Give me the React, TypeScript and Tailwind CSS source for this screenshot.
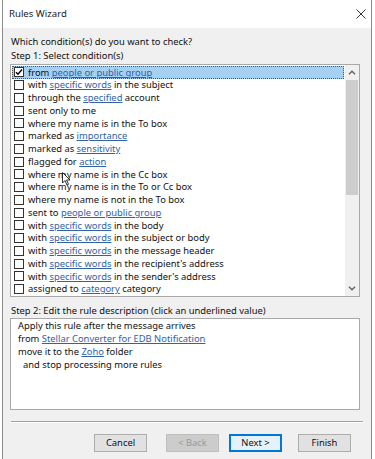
import React from "react";

type Part = { t: string; link?: boolean };

const conditions: Part[][] = [
  [{ t: "from " }, { t: "people or public group", link: true }],
  [{ t: "with " }, { t: "specific words", link: true }, { t: " in the subject" }],
  [{ t: "through the " }, { t: "specified", link: true }, { t: " account" }],
  [{ t: "sent only to me" }],
  [{ t: "where my name is in the To box" }],
  [{ t: "marked as " }, { t: "importance", link: true }],
  [{ t: "marked as " }, { t: "sensitivity", link: true }],
  [{ t: "flagged for " }, { t: "action", link: true }],
  [{ t: "where my name is in the Cc box" }],
  [{ t: "where my name is in the To or Cc box" }],
  [{ t: "where my name is not in the To box" }],
  [{ t: "sent to " }, { t: "people or public group", link: true }],
  [{ t: "with " }, { t: "specific words", link: true }, { t: " in the body" }],
  [{ t: "with " }, { t: "specific words", link: true }, { t: " in the subject or body" }],
  [{ t: "with " }, { t: "specific words", link: true }, { t: " in the message header" }],
  [{ t: "with " }, { t: "specific words", link: true }, { t: " in the recipient's address" }],
  [{ t: "with " }, { t: "specific words", link: true }, { t: " in the sender's address" }],
  [{ t: "assigned to " }, { t: "category", link: true }, { t: " category" }],
];

function Text({ parts }: { parts: Part[] }) {
  return (
    <>
      {parts.map((p, i) =>
        p.link ? (
          <span key={i} className="text-[#2f63a6] underline underline-offset-[1px]">
            {p.t}
          </span>
        ) : (
          <span key={i}>{p.t}</span>
        )
      )}
    </>
  );
}

function Checkbox({ checked }: { checked?: boolean }) {
  return (
    <div className="w-[10px] h-[10px] border border-[#333333] bg-white flex items-center justify-center shrink-0">
      {checked && (
        <svg width="8" height="8" viewBox="0 0 8 8">
          <path d="M1 4.2 L3 6.3 L7 1.5" fill="none" stroke="#000" strokeWidth="1.4" />
        </svg>
      )}
    </div>
  );
}

function Button({ text, disabled, focus }: { text: string; disabled?: boolean; focus?: boolean }) {
  return (
    <div
      className={
        "w-[53px] h-[18px] flex items-center justify-center " +
        (disabled
          ? "bg-[#cccccc] border border-[#bfbfbf] text-[#9a9a9a]"
          : focus
          ? "bg-[#e5f1fb] border-2 border-[#0078d7] text-[#111]"
          : "bg-[#e1e1e1] border border-[#adadad] text-[#111]")
      }
    >
      {text}
    </div>
  );
}

function ConditionList() {
  return (
    <div className="ml-[7px] w-[350px] h-[233px] border border-[#a9a9a9] bg-white flex">
      <div className="flex-1 pt-[1px] pl-[1px]">
        {conditions.map((c, i) => (
          <div
            key={i}
            className={
              "h-[12.75px] flex items-center gap-[4px] pl-[2px] whitespace-nowrap " +
              (i === 0 ? "bg-[#a6d0f2] outline-1 outline-dotted outline-[#555] -outline-offset-1 mr-[1px]" : "")
            }
          >
            <Checkbox checked={i === 0} />
            <span className="leading-none">
              <Text parts={c} />
            </span>
          </div>
        ))}
      </div>
      <div className="w-[14px] bg-[#f0f0f0] flex flex-col items-center">
        <div className="h-[15px] flex items-center justify-center">
          <svg width="8" height="5" viewBox="0 0 8 5">
            <path d="M1 4.2 L4 1.2 L7 4.2" fill="none" stroke="#5f5f5f" strokeWidth="1.3" />
          </svg>
        </div>
        <div className="w-[12px] h-[115px] bg-[#cdcdcd]" />
        <div className="flex-1" />
        <div className="h-[15px] flex items-center justify-center">
          <svg width="8" height="5" viewBox="0 0 8 5">
            <path d="M1 0.8 L4 3.8 L7 0.8" fill="none" stroke="#5f5f5f" strokeWidth="1.3" />
          </svg>
        </div>
      </div>
    </div>
  );
}

export default function App() {
  return (
    <div className="relative w-[375px] h-[459px] bg-white overflow-hidden text-[#111] text-[9.4px] font-['Noto_Sans','Open_Sans',sans-serif]">
      <div className="ml-[2px] w-[370px] h-full border-x border-[#8c8c8c] flex flex-col">
        <div className="h-[28px] bg-white flex items-center justify-between pl-[6px] pr-[5px]">
          <span className="text-[9.6px] text-[#222]">Rules Wizard</span>
          <svg width="10" height="10" viewBox="0 0 10 10">
            <path d="M0.5 0.5 L9.5 9.5 M9.5 0.5 L0.5 9.5" stroke="#333" strokeWidth="1" />
          </svg>
        </div>
        <div className="flex-1 bg-[#f0f0f0] pt-[7px]">
          <div className="pl-[8px] h-[14px] flex items-center">Which condition(s) do you want to check?</div>
          <div className="pl-[8px] h-[14px] flex items-center">Step 1: Select condition(s)</div>
          <div className="mt-[1px]">
            <ConditionList />
          </div>
          <div className="mt-[7px] pl-[8px] h-[14px] flex items-center">
            Step 2: Edit the rule description (click an underlined value)
          </div>
          <div className="ml-[7px] w-[350px] h-[92px] border border-[#a9a9a9] bg-white pl-[7px] leading-[13px]">
            <div>Apply this rule after the message arrives</div>
            <div>
              from <span className="text-[#2f63a6] underline">Stellar Converter for EDB Notification</span>
            </div>
            <div>
              move it to the <span className="text-[#2f63a6] underline">Zoho</span> folder
            </div>
            <div className="pl-[5px]">and stop processing more rules</div>
          </div>
          <div className="mt-[11px] ml-[8px] w-[352px] border-t border-[#a0a0a0] border-b border-b-white" />
          <div className="mt-[11px] flex pl-[91px]">
            <Button text="Cancel" />
            <div className="ml-[19px]">
              <Button text="< Back" disabled />
            </div>
            <div className="ml-[10px]">
              <Button text="Next >" focus />
            </div>
            <div className="ml-[16px]">
              <Button text="Finish" />
            </div>
          </div>
        </div>
      </div>
      <svg className="absolute left-[62px] top-[172px]" width="9" height="14" viewBox="0 0 9 14">
        <path d="M0.5 0.5 L0.5 11 L3 8.5 L5 13 L6.5 12.3 L4.6 8 L8 8 Z" fill="#fff" stroke="#000" strokeWidth="0.8" />
      </svg>
    </div>
  );
}
